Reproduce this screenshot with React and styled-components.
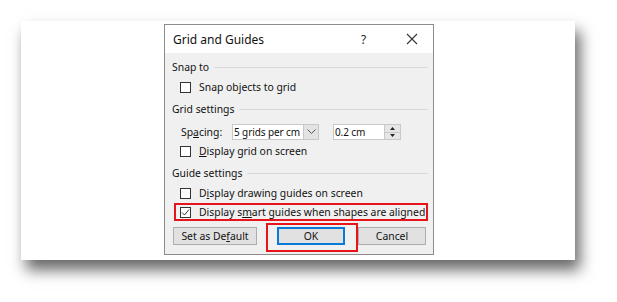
import React from "react";
import styled, { createGlobalStyle } from "styled-components";

const GlobalStyle = createGlobalStyle`
    html, body {
        margin: 0;
        padding: 0;
        background: #ffffff;
    }
    body {
        font-family: "Noto Sans", "Open Sans", sans-serif;
        color: #1a1a1a;
    }
`;

const App = () => {
    return (
        <Page>
            <GlobalStyle />
            <Canvas>
                <Dialog>
                    <TitleBar>
                        <Title>Grid and Guides</Title>
                        <Help>?</Help>
                        <Close>
                            <svg width="12" height="12" viewBox="0 0 12 12">
                                <path d="M1 1 L11 11 M11 1 L1 11" stroke="#333" strokeWidth="1.1" fill="none" />
                            </svg>
                        </Close>
                    </TitleBar>
                    <Body>
                        <Section>Snap to</Section>
                        <CheckRow>
                            <Box />
                            <span>Snap objects to <u>g</u>rid</span>
                        </CheckRow>

                        <Section>Grid settings</Section>
                        <SpacingRow>
                            <FieldLabel>Sp<u>a</u>cing:</FieldLabel>
                            <Combo>
                                <ComboText>5 grids per cm</ComboText>
                                <ComboArrow>
                                    <svg width="9" height="6" viewBox="0 0 9 6">
                                        <path d="M0.5 0.5 L4.5 4.5 L8.5 0.5" stroke="#555" strokeWidth="1" fill="none" />
                                    </svg>
                                </ComboArrow>
                            </Combo>
                            <Spin>
                                <ComboText>0.2 cm</ComboText>
                                <SpinButtons>
                                    <SpinHalf>
                                        <svg width="5" height="3" viewBox="0 0 5 3"><path d="M0 3 L2.5 0 L5 3 Z" fill="#222" /></svg>
                                    </SpinHalf>
                                    <SpinHalf>
                                        <svg width="5" height="3" viewBox="0 0 5 3"><path d="M0 0 L2.5 3 L5 0 Z" fill="#222" /></svg>
                                    </SpinHalf>
                                </SpinButtons>
                            </Spin>
                        </SpacingRow>
                        <CheckRow>
                            <Box />
                            <span><u>D</u>isplay grid on screen</span>
                        </CheckRow>

                        <Section>Guide settings</Section>
                        <CheckRow>
                            <Box />
                            <span>D<u>i</u>splay drawing guides on screen</span>
                        </CheckRow>
                        <MarkedRow>
                            <Box>
                                <svg width="9" height="9" viewBox="0 0 9 9">
                                    <path d="M1 4.5 L3.5 7 L8 1.5" stroke="#333" strokeWidth="1" fill="none" />
                                </svg>
                            </Box>
                            <span>Display s<u>m</u>art guides when shapes are aligned</span>
                        </MarkedRow>

                        <Buttons>
                            <Button $width={84}>Set as De<u>f</u>ault</Button>
                            <OkWrap>
                                <Button $width={68} $primary>OK</Button>
                                <Highlight />
                            </OkWrap>
                            <Button $width={68}>Cancel</Button>
                        </Buttons>
                    </Body>
                </Dialog>
            </Canvas>
        </Page>
    );
};

const Page = styled.div`
    width: 617px;
    height: 302px;
    padding: 21px 0 0 21px;
    box-sizing: border-box;
    background: #ffffff;
    overflow: hidden;
`;

const Canvas = styled.div`
    width: 554px;
    height: 239px;
    background: #ffffff;
    box-shadow: 5px 10px 14px rgba(0, 0, 0, 0.6);
    padding: 3px 0 0 143px;
    box-sizing: border-box;
`;

const Dialog = styled.div`
    width: 270px;
    height: 231px;
    box-sizing: border-box;
    border: 1px solid #8c8c8c;
    background: #f0f0f0;
    display: flex;
    flex-direction: column;
`;

const TitleBar = styled.div`
    height: 28px;
    background: #ffffff;
    display: flex;
    align-items: center;
    padding-left: 8px;
`;

const Title = styled.div`
    flex: 1;
    font-size: 12px;
    color: #111;
`;

const Help = styled.div`
    width: 14px;
    font-size: 12px;
    color: #222;
    margin-right: 31px;
`;

const Close = styled.div`
    width: 12px;
    display: flex;
    margin-right: 15px;
`;

const Body = styled.div`
    padding: 4px 5px 0 7px;
    display: flex;
    flex-direction: column;
    font-size: 10.4px;
    white-space: nowrap;
    color: #111;
`;

const Section = styled.div`
    height: 20px;
    display: flex;
    align-items: center;
    gap: 5px;
    margin-top: 2px;
    &:first-child {
        margin-top: 0;
    }
    &::after {
        content: "";
        flex: 1;
        height: 1px;
        background: #d8d8d8;
    }
`;

const CheckRow = styled.div`
    height: 20px;
    display: flex;
    align-items: center;
    gap: 8px;
    padding-left: 8px;
`;

const MarkedRow = styled(CheckRow)`
    height: 18px;
    box-sizing: border-box;
    border: 2px solid #e8141c;
    margin-left: 2px;
    padding-left: 4px;
`;

const Box = styled.div`
    width: 11px;
    height: 11px;
    box-sizing: border-box;
    border: 1px solid #333;
    background: #ffffff;
    display: flex;
    align-items: center;
    justify-content: center;
    flex-shrink: 0;
`;

const SpacingRow = styled.div`
    height: 18px;
    margin-top: 4px;
    display: flex;
    align-items: center;
    padding-left: 9px;
`;

const FieldLabel = styled.div`
    width: 51px;
`;

const Combo = styled.div`
    width: 87px;
    height: 16px;
    box-sizing: border-box;
    border: 1px solid #c8c8c8;
    background: #ffffff;
    display: flex;
    align-items: center;
`;

const ComboText = styled.div`
    flex: 1;
    padding-left: 1px;
    font-size: 10px;
    letter-spacing: -0.1px;
`;

const ComboArrow = styled.div`
    width: 14px;
    height: 14px;
    background: #e3e3e3;
    border-left: 1px solid #c8c8c8;
    display: flex;
    align-items: center;
    justify-content: center;
`;

const Spin = styled(Combo)`
    width: 68px;
    margin-left: 14px;
`;

const SpinButtons = styled.div`
    width: 15px;
    height: 14px;
    display: flex;
    flex-direction: column;
    border-left: 1px solid #c8c8c8;
`;

const SpinHalf = styled.div`
    flex: 1;
    background: #e6e6e6;
    display: flex;
    align-items: center;
    justify-content: center;
    &:first-child {
        border-bottom: 1px solid #c8c8c8;
    }
`;

const Buttons = styled.div`
    margin-top: 6px;
    display: flex;
    align-items: center;
    padding-left: 1px;
`;

const Button = styled.div`
    width: ${(p) => p.$width}px;
    height: 18px;
    box-sizing: border-box;
    border: ${(p) => (p.$primary ? "2px solid #0a78d7" : "1px solid #adadad")};
    background: #e1e1e1;
    display: flex;
    align-items: center;
    justify-content: center;
    color: #111;
`;

const OkWrap = styled.div`
    position: relative;
    margin: 0 13px 0 20px;
`;

const Highlight = styled.div`
    position: absolute;
    left: -11px;
    top: -4px;
    width: 92px;
    height: 29px;
    box-sizing: border-box;
    border: 2px solid #e8141c;
    pointer-events: none;
`;

export default App;
